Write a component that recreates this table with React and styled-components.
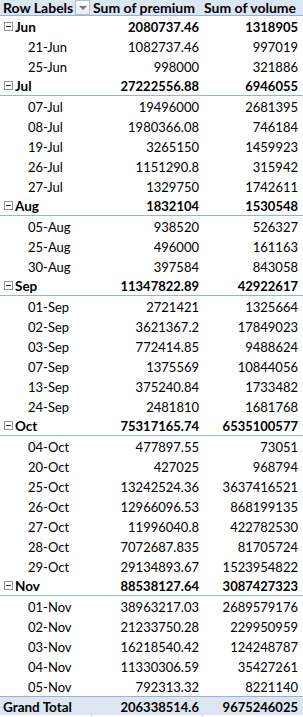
import React from "react";
import styled, { createGlobalStyle } from "styled-components";

const GlobalStyle = createGlobalStyle`
  html, body { margin: 0; padding: 0; background: #ffffff; }
  body { font-family: Lato, "Open Sans", sans-serif; color: #000; }
`;

const COLS = "92px 111px 100px";

const Sheet = styled.div`
  width: 303px;
  height: 717px;
  overflow: hidden;
  font-size: 13px;
  background: #fff;
`;

const HeaderRow = styled.div`
  display: grid;
  grid-template-columns: ${COLS};
  height: 16px;
  box-sizing: border-box;
  background: #dce6f1;
  border-bottom: 1px solid #95b3d7;
  font-weight: 700;
  font-size: 14px;
`;

const HeaderCell = styled.div`
  display: flex;
  align-items: center;
  justify-content: ${(p) => (p.$withFilter ? "space-between" : "flex-start")};
  padding-left: ${(p) => (p.$withFilter ? 3 : 1)}px;
  padding-right: ${(p) => (p.$withFilter ? 2 : 0)}px;
  line-height: 15px;
  white-space: nowrap;
`;

const FilterButton = styled.div`
  width: 15px;
  height: 15px;
  box-sizing: border-box;
  align-self: flex-start;
  border: 1px solid #b5bcc6;
  background: linear-gradient(#ffffff, #e7eaee);
  display: flex;
  align-items: center;
  justify-content: center;
`;

const Triangle = styled.div`
  width: 0;
  height: 0;
  border-left: 4px solid transparent;
  border-right: 4px solid transparent;
  border-top: 4px solid #6d7581;
  margin-top: 1px;
`;

const Row = styled.div`
  display: grid;
  grid-template-columns: ${COLS};
  height: 20px;
  box-sizing: border-box;
  font-weight: ${(p) => (p.$group ? 700 : 400)};
  border-bottom: ${(p) => (p.$line ? "1px solid #95b3d7" : "none")};
`;

const LabelCell = styled.div`
  display: flex;
  align-items: center;
  padding-left: ${(p) => p.$indent}px;
  padding-top: ${(p) => (p.$line ? 1 : 2)}px;
  font-size: ${(p) => p.$size || 13}px;
  white-space: nowrap;
`;

const ValueCell = styled.div`
  display: flex;
  align-items: center;
  justify-content: flex-end;
  padding-right: ${(p) => p.$pad}px;
  padding-top: ${(p) => (p.$line ? 1 : 2)}px;
  white-space: nowrap;
`;

const CollapseBox = styled.span`
  width: 9px;
  height: 9px;
  box-sizing: border-box;
  border: 1px solid #8a96a6;
  background: #fff;
  margin-right: 2px;
  margin-top: -1px;
  display: inline-flex;
  align-items: center;
  justify-content: center;
  &::after {
    content: "";
    width: 5px;
    height: 1px;
    background: #333;
  }
`;

const TotalRow = styled.div`
  display: grid;
  grid-template-columns: ${COLS};
  height: 19px;
  box-sizing: border-box;
  background: #dce6f1;
  border-top: 1px solid #95b3d7;
  font-weight: 700;
`;

const GridStrip = styled.div`
  display: grid;
  grid-template-columns: ${COLS};
  height: 10px;
`;

const GridCell = styled.div`
  border-right: ${(p) => (p.$last ? "none" : "1px solid #d4d4d4")};
`;

const data = [
  {
    name: "Jun", p: "2080737.46", v: "1318905", line: false,
    items: [
      ["21-Jun", "1082737.46", "997019"],
      ["25-Jun", "998000", "321886"],
    ],
  },
  {
    name: "Jul", p: "27222556.88", v: "6946055", line: true,
    items: [
      ["07-Jul", "19496000", "2681395"],
      ["08-Jul", "1980366.08", "746184"],
      ["19-Jul", "3265150", "1459923"],
      ["26-Jul", "1151290.8", "315942"],
      ["27-Jul", "1329750", "1742611"],
    ],
  },
  {
    name: "Aug", p: "1832104", v: "1530548", line: true,
    items: [
      ["05-Aug", "938520", "526327"],
      ["25-Aug", "496000", "161163"],
      ["30-Aug", "397584", "843058"],
    ],
  },
  {
    name: "Sep", p: "11347822.89", v: "42922617", line: true,
    items: [
      ["01-Sep", "2721421", "1325664"],
      ["02-Sep", "3621367.2", "17849023"],
      ["03-Sep", "772414.85", "9488624"],
      ["07-Sep", "1375569", "10844056"],
      ["13-Sep", "375240.84", "1733482"],
      ["24-Sep", "2481810", "1681768"],
    ],
  },
  {
    name: "Oct", p: "75317165.74", v: "6535100577", line: true,
    items: [
      ["04-Oct", "477897.55", "73051"],
      ["20-Oct", "427025", "968794"],
      ["25-Oct", "13242524.36", "3637416521"],
      ["26-Oct", "12966096.53", "868199135"],
      ["27-Oct", "11996040.8", "422782530"],
      ["28-Oct", "7072687.835", "81705724"],
      ["29-Oct", "29134893.67", "1523954822"],
    ],
  },
  {
    name: "Nov", p: "88538127.64", v: "3087427323", line: true,
    items: [
      ["01-Nov", "38963217.03", "2689579176"],
      ["02-Nov", "21233750.28", "229950959"],
      ["03-Nov", "16218540.42", "124248787"],
      ["04-Nov", "11330306.59", "35427261"],
      ["05-Nov", "792313.32", "8221140"],
    ],
  },
];

export default function App() {
  return (
    <Sheet>
      <GlobalStyle />
      <HeaderRow>
        <HeaderCell $withFilter>
          <span>Row Labels</span>
          <FilterButton>
            <Triangle />
          </FilterButton>
        </HeaderCell>
        <HeaderCell>Sum of premium</HeaderCell>
        <HeaderCell>Sum of volume</HeaderCell>
      </HeaderRow>
      {data.map((g) => (
        <React.Fragment key={g.name}>
          <Row $group $line={g.line}>
            <LabelCell $indent={4} $line={g.line} $size={13.5}>
              <CollapseBox />
              {g.name}
            </LabelCell>
            <ValueCell $pad={4} $line={g.line}>{g.p}</ValueCell>
            <ValueCell $pad={5} $line={g.line}>{g.v}</ValueCell>
          </Row>
          {g.items.map((it) => (
            <Row key={it[0]}>
              <LabelCell $indent={28}>{it[0]}</LabelCell>
              <ValueCell $pad={4}>{it[1]}</ValueCell>
              <ValueCell $pad={5}>{it[2]}</ValueCell>
            </Row>
          ))}
        </React.Fragment>
      ))}
      <TotalRow>
        <LabelCell $indent={3} $line $size={13.5}>Grand Total</LabelCell>
        <ValueCell $pad={4} $line>206338514.6</ValueCell>
        <ValueCell $pad={5} $line>9675246025</ValueCell>
      </TotalRow>
      <GridStrip>
        <GridCell />
        <GridCell />
        <GridCell $last />
      </GridStrip>
    </Sheet>
  );
}
